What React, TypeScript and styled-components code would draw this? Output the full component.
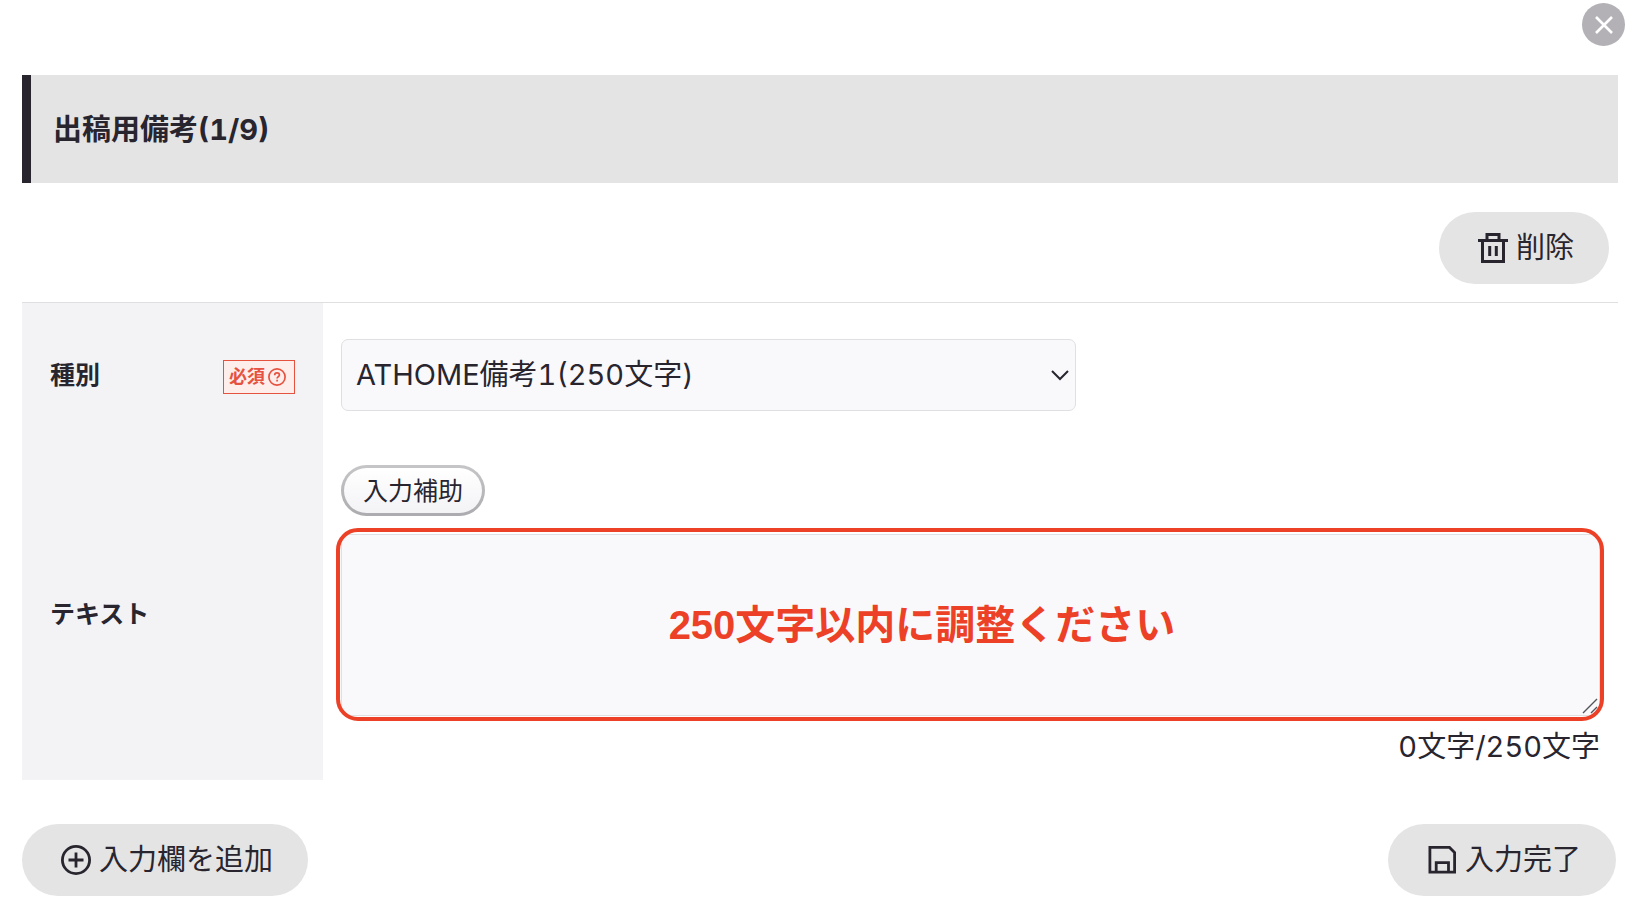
import React, { useState } from "react";
import styled, { createGlobalStyle } from "styled-components";

const ink = "#28252f";
const red = "#ec4127";

const GlobalStyle = createGlobalStyle`
  *, *::before, *::after { box-sizing: border-box; }
  body {
    margin: 0;
    background: #fff;
    color: ${ink};
    font-family: Inter, "Noto Sans CJK JP", sans-serif;
    font-size: 29px;
    line-height: 40px;
    font-variant-numeric: tabular-nums;
  }
  button, select, textarea { font: inherit; font-variant-numeric: inherit; color: inherit; margin: 0; }
`;

const Dialog = styled.form`
  padding: 3px 16px 12px 22px;
`;

const TopBar = styled.div`
  display: flex;
  justify-content: flex-end;
  padding-right: 9px;
  margin: 0 -16px 29px 0;
`;

const CloseButton = styled.button`
  display: flex;
  align-items: center;
  justify-content: center;
  width: 43px;
  height: 43px;
  padding: 0;
  border: 0;
  border-radius: 50%;
  background: #b3b1b6;
  cursor: pointer;
`;

const Heading = styled.h1`
  margin: 0;
  padding: 35px 22px 33px;
  border-left: 9px solid ${ink};
  background: #e4e4e4;
  font-size: 29px;
  line-height: 40px;
  font-weight: 700;
`;

const Actions = styled.div<{ $spread?: boolean }>`
  display: flex;
  justify-content: ${(p) => (p.$spread ? "space-between" : "flex-end")};
  padding: ${(p) => (p.$spread ? "44px 2px 0 0" : "29px 9px 18px")};
`;

const PillButton = styled.button`
  display: flex;
  align-items: center;
  gap: 8px;
  height: 72px;
  padding: 0 35px 0 39px;
  border: 0;
  border-radius: 36px;
  background: #e4e4e4;
  font-size: 29px;
  line-height: 40px;
  cursor: pointer;
`;

const Fields = styled.div`
  border-top: 1px solid #e0e0e2;
`;

const Row = styled.div`
  display: grid;
  grid-template-columns: 301px minmax(0, 1fr);
`;

const LabelCell = styled.div`
  display: flex;
  align-items: center;
  justify-content: space-between;
  padding: 0 28px;
  background: #f3f3f6;
`;

const Label = styled.label`
  font-size: 25px;
  line-height: 36px;
  font-weight: 700;
`;

const Required = styled.span`
  display: flex;
  align-items: center;
  gap: 3px;
  height: 34px;
  margin-top: 4px;
  padding: 0 8px 0 5px;
  border: 1px solid #e5523f;
  background: #fdeeeb;
  color: #e5523f;
  font-size: 18px;
  line-height: 24px;
  font-weight: 700;
`;

const FieldCell = styled.div<{ $roomy?: boolean }>`
  padding: ${(p) => (p.$roomy ? "36px 18px" : "18px 18px 13px")};
`;

const SelectBox = styled.div`
  position: relative;
  max-width: 735px;

  svg {
    position: absolute;
    top: 28px;
    right: 7px;
    pointer-events: none;
  }
`;

const Select = styled.select`
  display: block;
  width: 100%;
  height: 72px;
  padding: 0 40px 0 14px;
  appearance: none;
  border: 1px solid #e0e0e2;
  border-radius: 7px;
  background: #f9f9fc;
`;

const AssistButton = styled.button`
  display: block;
  height: 51px;
  margin-bottom: 18px;
  padding: 0 19px;
  border: 3px solid transparent;
  border-radius: 26px;
  background:
    linear-gradient(#fff, #f3f3f6) padding-box,
    linear-gradient(#c6c6c8, #acacb0) border-box;
  font-size: 25px;
  line-height: 36px;
  cursor: pointer;
`;

const TextBox = styled.div`
  position: relative;
`;

const TextArea = styled.textarea`
  display: block;
  width: 100%;
  height: 182px;
  padding: 14px;
  border: 1px solid #e0e0e2;
  border-radius: 7px;
  background: #f9f9fc;
  outline: 0;

  &::-webkit-resizer { display: none; }
`;

const Grip = styled.svg`
  position: absolute;
  right: 2px;
  bottom: 2px;
  pointer-events: none;
`;

const Callout = styled.div`
  position: absolute;
  inset: -6px -4px -5px -5px;
  display: flex;
  align-items: center;
  justify-content: center;
  padding-right: 96px;
  border: 4px solid ${red};
  border-radius: 22px;
  color: ${red};
  font-family: "Liberation Sans", "Noto Sans CJK JP", sans-serif;
  font-size: 40px;
  line-height: 60px;
  font-weight: 700;
  pointer-events: none;
`;

const Counter = styled.output`
  display: block;
  margin-top: 11px;
  text-align: right;
`;

const TrashIcon = () => (
  <svg width="30" height="30" viewBox="0 0 30 30" fill="none" stroke={ink} strokeWidth="3" aria-hidden="true">
    <path d="M0 7.5H30M9 7V1.5H21V7M4.5 8V28.5H25.5V8" />
    <path d="M11.7 13V23M18.3 13V23" />
  </svg>
);

const PlusIcon = () => (
  <svg width="30" height="30" viewBox="0 0 30 30" fill="none" stroke={ink} strokeWidth="2.8" aria-hidden="true">
    <circle cx="15" cy="15" r="13.6" />
    <path d="M15 7.5V22.5M7.5 15H22.5" />
  </svg>
);

const SaveIcon = () => (
  <svg width="30" height="30" viewBox="0 0 30 30" fill="none" stroke={ink} strokeWidth="2.8" aria-hidden="true">
    <path d="M2.9 2.4H22.5L27.6 7.5V27.1H2.9Z" />
    <path d="M9.2 27V17.6H21.5V27" />
  </svg>
);

const QuestionIcon = () => (
  <svg width="18" height="18" viewBox="0 0 18 18" fill="none" stroke="currentColor" strokeWidth="1.7" aria-hidden="true">
    <circle cx="9" cy="9" r="8.1" />
    <path d="M6.7 7.2C6.7 5.8 7.7 4.9 9 4.9S11.4 5.8 11.4 7C11.4 8.6 9.1 8.7 9.1 10.6" />
    <path d="M9.1 11.8V13.5" />
  </svg>
);

const CloseIcon = () => (
  <svg width="18" height="18" viewBox="0 0 18 18" stroke="#fff" strokeWidth="2.6" aria-hidden="true">
    <path d="M1 1L17 17M17 1L1 17" />
  </svg>
);

const ChevronIcon = () => (
  <svg width="18" height="16" viewBox="0 0 18 16" fill="none" stroke={ink} strokeWidth="2" aria-hidden="true">
    <path d="M1 4L9 12L17 4" />
  </svg>
);

export default function App() {
  const [text, setText] = useState("");

  return (
    <>
      <GlobalStyle />
      <Dialog onSubmit={(e) => e.preventDefault()}>
        <TopBar>
          <CloseButton type="button" aria-label="閉じる">
            <CloseIcon />
          </CloseButton>
        </TopBar>
        <Heading>出稿用備考(1/9)</Heading>
        <Actions>
          <PillButton type="button">
            <TrashIcon />
            削除
          </PillButton>
        </Actions>
        <Fields>
          <Row>
            <LabelCell>
              <Label htmlFor="kind">種別</Label>
              <Required>
                必須
                <QuestionIcon />
              </Required>
            </LabelCell>
            <FieldCell $roomy>
              <SelectBox>
                <Select id="kind">
                  <option>ATHOME備考1(250文字)</option>
                </Select>
                <ChevronIcon />
              </SelectBox>
            </FieldCell>
          </Row>
          <Row>
            <LabelCell>
              <Label htmlFor="text">テキスト</Label>
            </LabelCell>
            <FieldCell>
              <AssistButton type="button">入力補助</AssistButton>
              <TextBox>
                <TextArea id="text" value={text} onChange={(e) => setText(e.target.value)} />
                <Grip width="16" height="16" viewBox="0 0 16 16" stroke="#55535a" strokeWidth="1.4" aria-hidden="true">
                  <path d="M1 15L15 1M9 15L15 9" />
                </Grip>
                <Callout>250文字以内に調整ください</Callout>
              </TextBox>
              <Counter htmlFor="text">{text.length}文字/250文字</Counter>
            </FieldCell>
          </Row>
        </Fields>
        <Actions $spread>
          <PillButton type="button">
            <PlusIcon />
            入力欄を追加
          </PillButton>
          <PillButton type="submit">
            <SaveIcon />
            入力完了
          </PillButton>
        </Actions>
      </Dialog>
    </>
  );
}
